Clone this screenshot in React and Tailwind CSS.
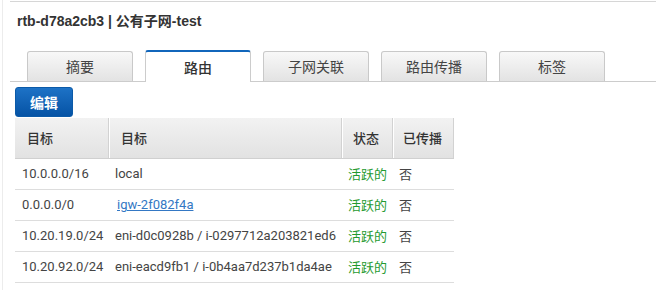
import React from "react";

const rows = [
  { dest: "10.0.0.0/16", target: "local", link: false },
  { dest: "0.0.0.0/0", target: "igw-2f082f4a", link: true },
  { dest: "10.20.19.0/24", target: "eni-d0c0928b / i-0297712a203821ed6", link: false },
  { dest: "10.20.92.0/24", target: "eni-eacd9fb1 / i-0b4aa7d237b1da4ae", link: false },
];

const tabs = ["摘要", "路由", "子网关联", "路由传播", "标签"];

export default function App() {
  return (
    <div className="w-[656px] h-[290px] bg-white flex overflow-hidden">
      <div className="w-[2px] shrink-0" />
      <div className="w-px shrink-0 bg-[#ececec]" />
      <div className="w-[7px] shrink-0" />
      <div className="flex-1 mt-px border-t border-[#d6d6d6] flex flex-col">
        <div className="mt-[9px] pl-[7px] h-[20px] leading-[20px] text-[14px] font-bold text-[#333] [font-family:'Liberation_Sans','Noto_Sans_CJK_SC',sans-serif]">
          rtb-d78a2cb3 | 公有子网-test
        </div>
        <div className="mt-[19px] h-[32px] flex items-end gap-[12px] pl-[17px] border-b border-[#cccccc] [font-family:'Noto_Sans_CJK_SC',sans-serif]">
          {tabs.map((t, i) =>
            i === 1 ? (
              <div
                key={t}
                className="w-[106px] h-[32px] -mb-px bg-white border-x border-[#cccccc] border-t-2 border-t-[#1166bb] rounded-t-[3px] flex items-center justify-center text-[14px] font-medium text-[#333]"
              >
                {t}
              </div>
            ) : (
              <div
                key={t}
                className="w-[106px] h-[30px] bg-gradient-to-b from-[#f8f8f8] to-[#e3e3e3] border-x border-t border-[#c9c9c9] rounded-t-[3px] flex items-center justify-center text-[14px] text-[#444]"
              >
                {t}
              </div>
            )
          )}
        </div>
        <div className="ml-[5px] mt-[5px] w-[58px] h-[30px] rounded-[3px] border border-[#0b5aa8] bg-gradient-to-b from-[#1d72c6] to-[#0553a5] flex items-center justify-center text-white text-[14px] font-bold [font-family:'Noto_Sans_CJK_SC',sans-serif]">
          编辑
        </div>
        <div className="ml-[5px] mt-px w-[439px] text-[13px] [font-family:Roboto,'Noto_Sans_CJK_SC',sans-serif]">
          <div className="flex h-[41px] bg-gradient-to-b from-[#f2f2f2] to-[#e2e2e2] border-b border-[#d0d0d0] font-medium text-[#333] [font-family:'Noto_Sans_CJK_SC',sans-serif]">
            <div className="w-[94px] pl-[12px] flex items-center border-r border-[#d2d2d2]">目标</div>
            <div className="w-[233px] pl-[11px] flex items-center border-l border-white border-r border-r-[#d2d2d2]">目标</div>
            <div className="w-[51px] pl-[10px] flex items-center border-l border-white border-r border-r-[#d2d2d2]">状态</div>
            <div className="w-[61px] pl-[9px] flex items-center border-l border-white border-r border-r-[#d2d2d2]">已传播</div>
          </div>
          {rows.map((r) => (
            <div key={r.dest} className="flex h-[31px] border-b border-[#dddddd] text-[#444]">
              <div className="w-[94px] pl-[7px] flex items-center">{r.dest}</div>
              <div className="w-[233px] pl-[6px] flex items-center whitespace-nowrap overflow-hidden">
                {r.link ? (
                  <span className="ml-[2px] text-[#3478c4] underline">{r.target}</span>
                ) : (
                  r.target
                )}
              </div>
              <div className="w-[51px] pl-[6px] flex items-center text-[#1f9a2f] [font-family:'Noto_Sans_CJK_SC',sans-serif]">活跃的</div>
              <div className="w-[61px] pl-[6px] flex items-center [font-family:'Noto_Sans_CJK_SC',sans-serif]">否</div>
            </div>
          ))}
        </div>
      </div>
    </div>
  );
}
